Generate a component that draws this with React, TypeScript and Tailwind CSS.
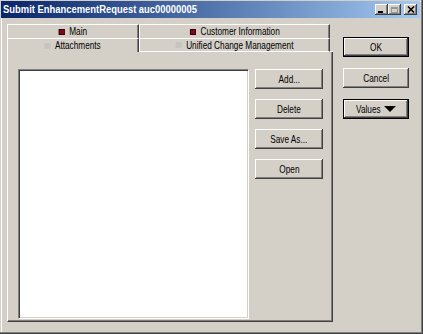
import React from "react";

const raised =
  "bg-[#d4d0c8] shadow-[inset_-1px_-1px_#404040,inset_1px_1px_#ffffff,inset_-2px_-2px_#808080]";

function Btn({ label, extra = "" }: { label: React.ReactNode; extra?: string }) {
  return (
    <div
      className={`h-[20px] w-[68px] shrink-0 flex items-center justify-center ${raised} ${extra}`}
    >
      {label}
    </div>
  );
}

function Lbl({ children }: { children: React.ReactNode }) {
  return <span className="inline-block scale-x-75 whitespace-nowrap leading-none">{children}</span>;
}

function TabLabel({ text, active }: { text: string; active: boolean }) {
  return (
    <div className="flex items-center gap-[6px] scale-x-75 whitespace-nowrap leading-none">
      {active ? (
        <span className="block w-[8px] h-[6px] bg-[#7d0a16] border border-[#2a0008]" />
      ) : (
        <span className="block w-[8px] h-[6px] bg-[#c6c4c0]" />
      )}
      <span>{text}</span>
    </div>
  );
}

function CaptionBtn({ children, extra = "" }: { children: React.ReactNode; extra?: string }) {
  return (
    <div className={`w-[13px] h-[11px] flex items-center justify-center ${raised} ${extra}`}>
      {children}
    </div>
  );
}

export default function App() {
  return (
    <div className="w-[423px] h-[334px] bg-[#d4d0c8] font-['Liberation_Sans',Arial,sans-serif] text-[11px] text-black shadow-[inset_-1px_-1px_#404040,inset_-2px_-2px_#808080,inset_1px_1px_#d4d0c8,inset_2px_2px_#ffffff] pt-[1px] pl-[1px] flex flex-col overflow-hidden">
      {/* Title bar */}
      <div className="h-[17px] w-[419px] bg-linear-to-r from-[#0a246a] to-[#a6caf0] flex items-center">
        <span className="ml-[2px] inline-block origin-left scale-x-[0.855] whitespace-nowrap font-bold text-white leading-none">
          Submit EnhancementRequest auc00000005
        </span>
        <div className="ml-auto mr-[3px] flex items-center">
          <CaptionBtn>
            <span className="block w-[5px] h-[2px] bg-black mt-[5px] -ml-[2px]" />
          </CaptionBtn>
          <CaptionBtn>
            <span className="block w-[7px] h-[6px] border border-t-2 border-[#9a9892]" />
          </CaptionBtn>
          <CaptionBtn extra="ml-[3px]">
            <svg width="8" height="7" viewBox="0 0 8 7">
              <path d="M1 0.5 L7 6.5 M7 0.5 L1 6.5" stroke="#000" strokeWidth="1.6" />
            </svg>
          </CaptionBtn>
        </div>
      </div>

      {/* Body */}
      <div className="flex pl-[6px] mt-[6px]">
        {/* Tab control */}
        <div className="w-[326px] flex flex-col">
          {/* Row 1 */}
          <div className="flex h-[14px]">
            <div className="w-[132px] h-full flex items-center justify-center border-t border-l border-r border-t-white border-l-white border-r-[#404040] shadow-[inset_-1px_0_#808080]">
              <TabLabel text="Main" active />
            </div>
            <div className="w-[191px] h-full flex items-center justify-center border-t border-l border-r border-t-white border-l-white border-r-[#404040] shadow-[inset_-1px_0_#808080]">
              <TabLabel text="Customer Information" active />
            </div>
          </div>
          {/* Row 2 */}
          <div className="flex h-[14px]">
            <div className="w-[132px] h-full flex items-center justify-center border-t border-l border-r border-t-white border-l-white border-r-[#404040] shadow-[inset_-1px_0_#808080]">
              <TabLabel text="Attachments" active={false} />
            </div>
            <div className="w-[191px] h-full flex items-center justify-center border-t border-l border-r border-b border-t-white border-l-white border-b-white border-r-[#404040] shadow-[inset_-1px_0_#808080]">
              <TabLabel text="Unified Change Management" active={false} />
            </div>
            <div className="w-[3px] h-full border-b border-b-white" />
          </div>
          {/* Panel */}
          <div className="h-[270px] flex items-start pl-[10px] pt-[17px] border-l border-r border-b border-l-white border-r-[#404040] border-b-[#404040] shadow-[inset_-1px_-1px_#808080]">
            <div className="w-[231px] h-[250px] bg-white border-t border-l border-b border-r border-t-[#808080] border-l-[#808080] border-b-white border-r-white shadow-[inset_1px_1px_#404040,inset_-1px_-1px_#d4d0c8]" />
            <div className="ml-[6px] flex flex-col gap-[10px]">
              <Btn label={<Lbl>Add...</Lbl>} />
              <Btn label={<Lbl>Delete</Lbl>} />
              <Btn label={<Lbl>Save As...</Lbl>} />
              <Btn label={<Lbl>Open</Lbl>} />
            </div>
          </div>
        </div>

        {/* Right buttons */}
        <div className="ml-[10px] mt-[13px] flex flex-col gap-[11px] w-[66px]">
          <div className="h-[20px] w-[66px] border border-black">
            <div className={`w-full h-full flex items-center justify-center ${raised}`}>
              <Lbl>OK</Lbl>
            </div>
          </div>
          <div className={`h-[20px] w-[66px] flex items-center justify-center ${raised}`}>
            <Lbl>Cancel</Lbl>
          </div>
          <div className="h-[20px] w-[66px] border border-black">
            <div className={`w-full h-full flex items-center justify-center gap-[4px] ${raised}`}>
              <span className="inline-block scale-x-75 origin-left mr-[-8px] whitespace-nowrap leading-none">Values</span>
              <svg width="12" height="6" viewBox="0 0 12 6">
                <path d="M0 0 H12 L6 6 Z" fill="#000" />
              </svg>
            </div>
          </div>
        </div>
      </div>
    </div>
  );
}
